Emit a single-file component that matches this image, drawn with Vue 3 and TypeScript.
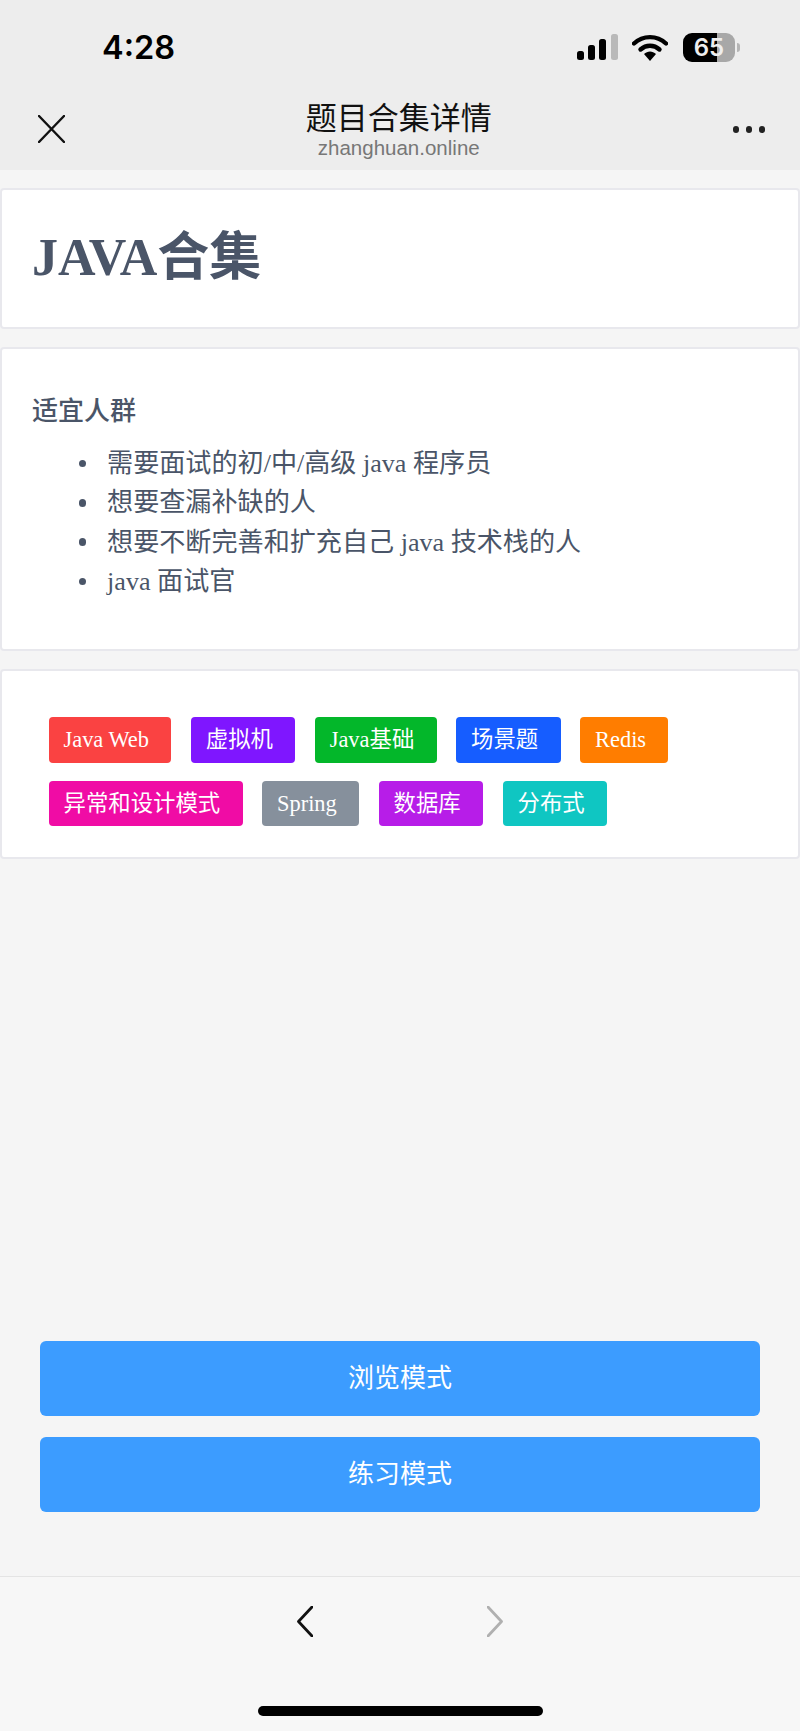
<script setup lang="ts">
interface Tag {
  label: string
  color: string
}

const audience: string[] = [
  '需要面试的初/中/高级 java 程序员',
  '想要查漏补缺的人',
  '想要不断完善和扩充自己 java 技术栈的人',
  'java 面试官'
]

const tags: Tag[] = [
  { label: 'Java Web', color: '#fa4242' },
  { label: '虚拟机', color: '#7f16ff' },
  { label: 'Java基础', color: '#03b72a' },
  { label: '场景题', color: '#165dff' },
  { label: 'Redis', color: '#ff7d00' },
  { label: '异常和设计模式', color: '#f00ca5' },
  { label: 'Spring', color: '#86909c' },
  { label: '数据库', color: '#b71de8' },
  { label: '分布式', color: '#0fc6c2' }
]

const modes: string[] = ['浏览模式', '练习模式']
</script>

<template>
  <div class="page">
    <header class="top">
      <div class="status">
        <span class="time">4:28</span>
        <div class="status-icons">
          <svg class="signal" width="41" height="26" viewBox="0 0 41 26">
            <rect x="0" y="17" width="7" height="9" rx="2.5" fill="#000" />
            <rect x="11" y="11" width="7" height="15" rx="2.5" fill="#000" />
            <rect x="22" y="5" width="7" height="21" rx="2.5" fill="#000" />
            <rect x="34" y="0" width="7" height="26" rx="2.5" fill="#b9b9b9" />
          </svg>
          <svg class="wifi" width="36" height="27" viewBox="0 0 36 27">
            <path d="M2 9.5C11 1 25 1 34 9.5" fill="none" stroke="#000" stroke-width="4.4" stroke-linecap="round" />
            <path d="M8.5 15.5C14 10.5 22 10.5 27.5 15.5" fill="none" stroke="#000" stroke-width="4.4" stroke-linecap="round" />
            <path d="M12 20C15.5 16.5 20.5 16.5 24 20L18 27Z" fill="#000" />
          </svg>
          <div class="battery"><span>65</span></div>
          <span class="nub"></span>
        </div>
      </div>
      <nav class="nav">
        <svg class="close" width="27" height="28" viewBox="0 0 27 28">
          <path d="M1 1L26 27M26 1L1 27" fill="none" stroke="#111" stroke-width="2.4" stroke-linecap="round" />
        </svg>
        <div class="heading">
          <div class="title">题目合集详情</div>
          <div class="domain">zhanghuan.online</div>
        </div>
        <div class="dots"><i></i><i></i><i></i></div>
      </nav>
    </header>

    <main class="content">
      <section class="card card-title">
        <h1>JAVA合集</h1>
      </section>

      <section class="card card-audience">
        <h2>适宜人群</h2>
        <ul>
          <li v-for="item in audience" :key="item">{{ item }}</li>
        </ul>
      </section>

      <section class="card card-tags">
        <span v-for="tag in tags" :key="tag.label" class="tag" :style="{ background: tag.color }">{{ tag.label }}</span>
      </section>
    </main>

    <div class="actions">
      <button v-for="mode in modes" :key="mode" type="button" class="mode-btn">{{ mode }}</button>
    </div>

    <footer class="bottom">
      <div class="arrows">
        <svg width="16" height="31" viewBox="0 0 16 31">
          <path d="M15 1L1.5 15.5L15 30" fill="none" stroke="#111" stroke-width="2.8" stroke-linecap="round" stroke-linejoin="round" />
        </svg>
        <svg width="16" height="31" viewBox="0 0 16 31">
          <path d="M1 1L14.5 15.5L1 30" fill="none" stroke="#b0b0b0" stroke-width="2.8" stroke-linecap="round" stroke-linejoin="round" />
        </svg>
      </div>
      <div class="home-bar"></div>
    </footer>
  </div>
</template>

<style scoped>
.page {
  display: flex;
  flex-direction: column;
  height: 1731px;
  overflow: hidden;
  background: #f5f5f5;
  font-family: "Liberation Serif", "Noto Sans CJK SC", serif;
  color: #4a5568;
}

.top {
  height: 170px;
  background: #ededed;
  flex: none;
}

.status {
  display: flex;
  justify-content: space-between;
  align-items: center;
  height: 94px;
  padding: 0 60px 0 102px;
}

.time {
  font-family: Inter, "Liberation Sans", sans-serif;
  font-size: 32.5px;
  font-weight: 600;
  color: #000;
}

.status-icons {
  display: flex;
  align-items: center;
}

.signal {
  margin-right: 14px;
}

.wifi {
  margin-right: 15px;
}

.battery {
  display: flex;
  align-items: center;
  justify-content: center;
  width: 52px;
  height: 29px;
  box-sizing: border-box;
  border-radius: 9px;
  background: linear-gradient(90deg, #000 65%, #a8a8a8 65%);
  color: #eee;
  font-family: Inter, "Liberation Sans", sans-serif;
  font-size: 24px;
  font-weight: 600;
}

.nub {
  width: 3px;
  height: 9px;
  margin-left: 2px;
  border-radius: 0 3px 3px 0;
  background: #b5b5b5;
}

.nav {
  display: flex;
  align-items: flex-start;
  justify-content: space-between;
  padding: 0 35px 0 38px;
}

.close {
  margin-top: 21px;
}

.heading {
  margin-top: 3px;
  text-align: center;
}

.title {
  font-family: "Noto Sans CJK SC", sans-serif;
  font-size: 31px;
  line-height: 38px;
  color: #111;
}

.domain {
  margin-top: 1px;
  font-family: "Liberation Sans", sans-serif;
  font-size: 20.5px;
  line-height: 23px;
  color: #777;
}

.dots {
  display: flex;
  gap: 6.5px;
  margin-top: 32px;
}

.dots i {
  display: block;
  width: 6.5px;
  height: 6.5px;
  border-radius: 50%;
  background: #222;
}

.content {
  display: flex;
  flex: 1;
  flex-direction: column;
  gap: 18px;
  padding-top: 18px;
}

.card {
  box-sizing: border-box;
  border: 2px solid #e8e8ed;
  border-radius: 4px;
  background: #fff;
}

.card-title {
  display: flex;
  align-items: center;
  height: 141px;
  padding: 0 30px;
}

h1 {
  margin: 0;
  font-size: 52px;
  font-weight: 700;
  line-height: 1.2;
}

.card-audience {
  height: 304px;
  padding: 43px 30px 0;
}

h2 {
  margin: 0;
  font-size: 26px;
  font-weight: 500;
  line-height: 39px;
}

ul {
  margin: 13px 0 0;
  padding: 0 0 0 46.5px;
  font-size: 26.1px;
  line-height: 39.3px;
  list-style: none;
}

li {
  display: flex;
  align-items: center;
}

li::before {
  content: '';
  flex: none;
  width: 7.6px;
  height: 7.6px;
  margin-right: 21px;
  border-radius: 50%;
  background: #4a5568;
}

.card-tags {
  display: flex;
  flex-wrap: wrap;
  align-content: flex-start;
  gap: 18px 19.5px;
  height: 190px;
  padding: 46px 46.5px 0;
}

.tag {
  box-sizing: border-box;
  height: 45.5px;
  padding: 0 22.3px 0 15px;
  border-radius: 4px;
  color: #fff;
  font-size: 22.4px;
  line-height: 45px;
}

.actions {
  display: flex;
  flex: none;
  flex-direction: column;
  gap: 21px;
  padding: 0 40px 64px;
}

.mode-btn {
  height: 75px;
  padding: 0 0 6px;
  border: 0;
  border-radius: 6px;
  background: #3c9cff;
  color: #fff;
  font-family: "Noto Sans CJK SC", sans-serif;
  font-size: 26px;
}

.bottom {
  display: flex;
  flex: none;
  flex-direction: column;
  align-items: center;
  height: 155px;
  box-sizing: border-box;
  border-top: 1px solid #e4e4e4;
  background: #f7f7f7;
}

.arrows {
  display: flex;
  gap: 174px;
  margin-top: 29px;
}

.home-bar {
  width: 285px;
  height: 10px;
  margin-top: 69px;
  border-radius: 5px;
  background: #000;
}
</style>
